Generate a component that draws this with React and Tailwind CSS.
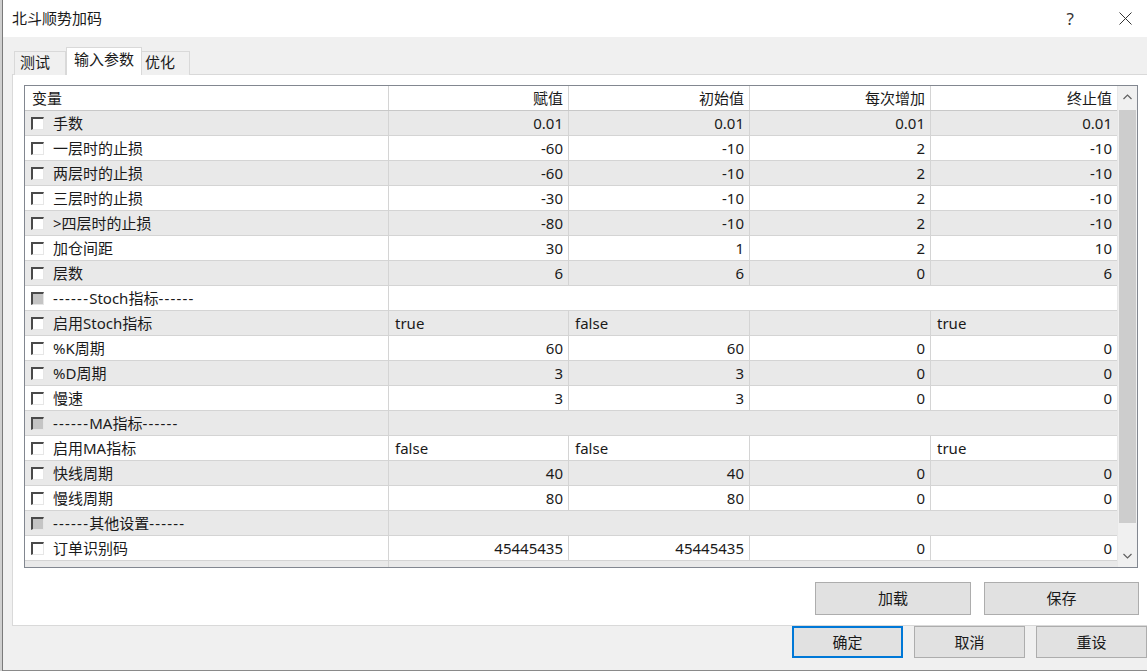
import React from 'react';

const rows = [
  { name: '手数', v: ['0.01', '0.01', '0.01', '0.01'] },
  { name: '一层时的止损', v: ['-60', '-10', '2', '-10'] },
  { name: '两层时的止损', v: ['-60', '-10', '2', '-10'] },
  { name: '三层时的止损', v: ['-30', '-10', '2', '-10'] },
  { name: '>四层时的止损', v: ['-80', '-10', '2', '-10'] },
  { name: '加仓间距', v: ['30', '1', '2', '10'] },
  { name: '层数', v: ['6', '6', '0', '6'] },
  { name: '------Stoch指标------', section: true },
  { name: '启用Stoch指标', v: ['true', 'false', '', 'true'], left: true },
  { name: '%K周期', v: ['60', '60', '0', '0'] },
  { name: '%D周期', v: ['3', '3', '0', '0'] },
  { name: '慢速', v: ['3', '3', '0', '0'] },
  { name: '------MA指标------', section: true },
  { name: '启用MA指标', v: ['false', 'false', '', 'true'], left: true },
  { name: '快线周期', v: ['40', '40', '0', '0'] },
  { name: '慢线周期', v: ['80', '80', '0', '0'] },
  { name: '------其他设置------', section: true },
  { name: '订单识别码', v: ['45445435', '45445435', '0', '0'] },
  { name: '', section: true },
];

const colW = ['w-[180px]', 'w-[181px]', 'w-[181px]', 'w-[187px]'];

// dashes in the original font are wider, so space them out a little
const Label = ({ text }) =>
  text.split(/(-+)/).map((part, i) =>
    part.startsWith('-') ? (
      <span key={i} className="tracking-[1.2px]">{part}</span>
    ) : (
      <span key={i}>{part}</span>
    )
  );

function CheckBox({ disabled }) {
  return (
    <div
      className={`w-[13px] h-[13px] shrink-0 border-t-2 border-l-2 border-t-[#4a4a4a] border-l-[#4a4a4a] border-r border-b border-r-[#e6e6e6] border-b-[#e6e6e6] ${
        disabled ? 'bg-[#c4c4c4]' : 'bg-white'
      }`}
    />
  );
}

function Row({ row, idx }) {
  const bg = idx % 2 === 0 ? 'bg-[#e9e9e9]' : 'bg-white';
  return (
    <div className={`flex h-[25px] shrink-0 border-b border-[#d4d4d4] ${bg}`}>
      <div className="w-[363px] flex items-center pl-[6px] gap-[9px]">
        <CheckBox disabled={row.section} />
        <span className="whitespace-nowrap"><Label text={row.name} /></span>
      </div>
      {row.section ? (
        <div className="w-[729px] border-l border-[#d4d4d4]" />
      ) : (
        row.v.map((val, i) => (
          <div
            key={i}
            className={`${colW[i]} border-l border-[#d4d4d4] flex items-center ${
              row.left ? 'justify-start pl-[6px]' : 'justify-end pr-[5px]'
            }`}
          >
            {val}
          </div>
        ))
      )}
    </div>
  );
}

function Chevron({ up }) {
  return (
    <svg width="9" height="6" viewBox="0 0 9 6" className="text-[#606060]">
      <polyline
        points={up ? '0.5,5 4.5,1 8.5,5' : '0.5,1 4.5,5 8.5,1'}
        fill="none"
        stroke="currentColor"
        strokeWidth="1.2"
      />
    </svg>
  );
}

function Btn({ children, w, primary }) {
  return (
    <div
      className={`${w} h-full flex items-center justify-center bg-[#e1e1e1] ${
        primary ? 'border-2 border-[#0078d7]' : 'border border-[#adadad]'
      }`}
    >
      {children}
    </div>
  );
}

export default function App() {
  return (
    <div
      className="w-[1147px] h-[671px] overflow-hidden flex bg-[#f0f0f0] text-[15px] text-[#1a1a1a] leading-none"
      style={{ fontFamily: '"Noto Sans", "Noto Sans CJK SC", sans-serif' }}
    >
      {/* edge of window behind */}
      <div className="w-[2px] h-full bg-[#cfcfcf]" />

      <div className="flex-1 flex flex-col border-l border-[#7a7a7a]">
        {/* TITLE BAR */}
        <div className="h-[37px] shrink-0 bg-white flex items-center pl-[9px]">
          <span>北斗顺势加码</span>
          <span className="ml-auto text-[17px] text-[#333] mr-[45px]">?</span>
          <svg width="13" height="13" viewBox="0 0 13 13" className="mr-[15px]">
            <path d="M0.5 0.5 L12.5 12.5 M12.5 0.5 L0.5 12.5" stroke="#333" strokeWidth="1" />
          </svg>
        </div>

        {/* BODY */}
        <div className="flex-1 flex flex-col border-b border-[#8a8a8a] pt-[10px]">
          {/* TABS */}
          <div className="flex items-end h-[28px] pl-[11px] relative z-10">
            <div className="h-[24px] w-[52px] flex items-start pt-[3px] pl-[5px] border border-b-0 border-[#d9d9d9] bg-[#f0f0f0]">
              测试
            </div>
            <div className="h-[28px] w-[76px] flex items-start pt-[4px] pl-[7px] border border-b-0 border-[#d9d9d9] bg-white">
              输入参数
            </div>
            <div className="h-[24px] w-[48px] flex items-start pt-[3px] pl-[3px] border border-b-0 border-l-0 border-[#d9d9d9] bg-[#f0f0f0]">
              优化
            </div>
          </div>

          {/* TAB PANEL */}
          <div className="h-[552px] -mt-px ml-[9px] border border-r-0 border-[#d9d9d9] bg-white flex flex-col">
            {/* TABLE */}
            <div className="mt-[10px] ml-[11px] w-[1114px] h-[483px] border border-[#828790] flex">
              <div className="w-[1092px] flex flex-col overflow-hidden">
                <div className="flex h-[25px] shrink-0 border-b border-[#c8c8c8] bg-white">
                  <div className="w-[363px] flex items-center pl-[7px]">变量</div>
                  {['赋值', '初始值', '每次增加', '终止值'].map((h, i) => (
                    <div key={h} className={`${colW[i]} border-l border-[#d4d4d4] flex items-center justify-end pr-[5px]`}>
                      {h}
                    </div>
                  ))}
                </div>
                {rows.map((r, i) => (
                  <Row key={i} row={r} idx={i} />
                ))}
              </div>

              {/* SCROLLBAR */}
              <div className="w-[20px] flex flex-col bg-[#f0f0f0] border-l border-[#e8e8e8]">
                <div className="h-[22px] flex items-center justify-center">
                  <Chevron up />
                </div>
                <div className="mx-px mt-[2px] h-[413px] bg-[#cdcdcd]" />
                <div className="flex-1" />
                <div className="h-[22px] flex items-center justify-center">
                  <Chevron />
                </div>
              </div>
            </div>

            {/* LOAD / SAVE */}
            <div className="flex gap-[13px] pl-[802px] mt-[14px] h-[33px]">
              <Btn w="w-[156px]">加载</Btn>
              <Btn w="w-[155px]">保存</Btn>
            </div>
          </div>

          {/* DIALOG BUTTONS */}
          <div className="flex gap-[11px] pl-[789px] h-[32px]">
            <Btn w="w-[111px]" primary>确定</Btn>
            <Btn w="w-[111px]">取消</Btn>
            <Btn w="w-[111px]">重设</Btn>
          </div>
        </div>
      </div>
    </div>
  );
}
